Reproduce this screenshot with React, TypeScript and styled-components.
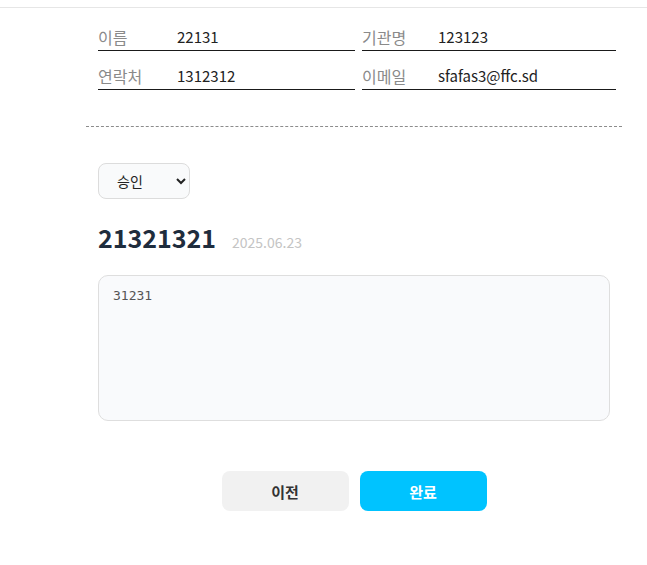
import * as React from 'react'
import styled, { createGlobalStyle } from 'styled-components'

const GlobalStyle = createGlobalStyle`
  body {
    margin: 0;
    background: #fff;
    font-family: "Noto Sans CJK KR", "Noto Sans", sans-serif;
    color: #222;
  }
`

const TopRule = styled.div`
  height: 7px;
  border-bottom: 1px solid #e6e6e6;
`

const Main = styled.main`
  width: 536px;
  margin-left: 86px;
`

const InfoGrid = styled.div`
  display: grid;
  grid-template-columns: 257px 254px;
  column-gap: 7px;
  margin: 4px 6px 0 12px;
`

const InfoRow = styled.div`
  display: flex;
  align-items: center;
  padding: 14px 0 2px;
  line-height: 22px;
  border-bottom: 1px solid #1a1a1a;
  font-size: 15px;
`

const Label = styled.span<{ $w: number }>`
  width: ${p => p.$w}px;
  flex-shrink: 0;
  font-size: 16px;
  color: #8a8a8a;
`

const Value = styled.span`
  color: #222;
`

const Divider = styled.hr`
  margin: 36px 0 0;
  border: 0;
  border-top: 1px dashed #8c8c8c;
`

const Body = styled.section`
  padding: 36px 12px 0;
`

const StatusSelect = styled.select`
  width: 92px;
  height: 36px;
  padding: 0 8px 0 14px;
  border: 1px solid #dcdcdc;
  border-radius: 8px;
  background: #f9fafb;
  font-family: "Noto Sans CJK KR", "Noto Sans", sans-serif;
  font-size: 14px;
  color: #222;
`

const TitleLine = styled.div`
  display: flex;
  align-items: baseline;
  gap: 16px;
  margin-top: 22px;
`

const Title = styled.h2`
  margin: 0;
  font-size: 25px;
  line-height: 32px;
  font-weight: 700;
  color: #1f2d3d;
`

const DateText = styled.span`
  font-size: 14px;
  color: #c4c4c4;
`

const Memo = styled.textarea`
  display: block;
  box-sizing: border-box;
  width: 512px;
  height: 146px;
  margin-top: 22px;
  padding: 12px 14px;
  border: 1px solid #dedede;
  border-radius: 10px;
  background: #f9fafc;
  font-family: monospace;
  font-size: 13px;
  color: #555;
  resize: none;
`

const Actions = styled.div`
  display: flex;
  justify-content: center;
  gap: 11px;
  margin-top: 50px;
`

const Button = styled.button<{ $primary?: boolean }>`
  width: 127px;
  height: 40px;
  border: 0;
  border-radius: 8px;
  background: ${p => (p.$primary ? '#00c3ff' : '#f1f1f1')};
  color: ${p => (p.$primary ? '#fff' : '#333')};
  font-family: "Noto Sans CJK KR", "Noto Sans", sans-serif;
  font-size: 15px;
  font-weight: 700;
`

const info = [
  { label: '이름', value: '22131', w: 79 },
  { label: '기관명', value: '123123', w: 76 },
  { label: '연락처', value: '1312312', w: 79 },
  { label: '이메일', value: 'sfafas3@ffc.sd', w: 76 },
]

export default function App() {
  return (
    <>
      <GlobalStyle />
      <TopRule />
      <Main>
        <InfoGrid>
          {info.map(item => (
            <InfoRow key={item.label}>
              <Label $w={item.w}>{item.label}</Label>
              <Value>{item.value}</Value>
            </InfoRow>
          ))}
        </InfoGrid>
        <Divider />
        <Body>
          <StatusSelect defaultValue="approve">
            <option value="approve">승인</option>
            <option value="reject">반려</option>
          </StatusSelect>
          <TitleLine>
            <Title>21321321</Title>
            <DateText>2025.06.23</DateText>
          </TitleLine>
          <Memo defaultValue="31231" />
        </Body>
        <Actions>
          <Button>이전</Button>
          <Button $primary>완료</Button>
        </Actions>
      </Main>
    </>
  )
}
